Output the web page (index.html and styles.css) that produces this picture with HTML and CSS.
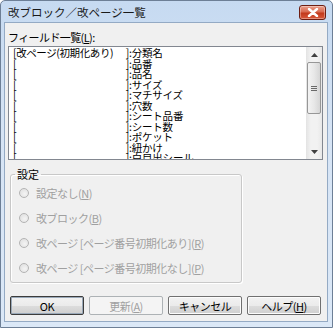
FILE: index.html
```html
<!DOCTYPE html>
<html lang="ja">
<head>
  <meta charset="UTF-8" />
  <title>改ブロック／改ページ一覧</title>
  <link rel="stylesheet" href="styles.css">
</head>
<body>

  <div class="window">

    <div class="titlebar">
      <span class="title">改ブロック／改ページ一覧</span>
      <div class="close">
        <svg width="12" height="9" viewBox="0 0 12 9">
          <path d="M2 1 L10 8 M10 1 L2 8" stroke="#fff" stroke-width="2.4" stroke-linecap="round"/>
        </svg>
      </div>
    </div>

    <div class="client">

      <div class="field-label">フィールド一覧(<u>L</u>):</div>

      <div class="listbox">
        <div class="rows">
          <div class="row"><span class="tag"><span>[改ページ(初期化あり)</span><span>]</span></span><span class="name">:分類名</span></div>
          <div class="row"><span class="tag"><span>[</span><span>]</span></span><span class="name">:品番</span></div>
          <div class="row"><span class="tag"><span>[</span><span>]</span></span><span class="name">:品名</span></div>
          <div class="row"><span class="tag"><span>[</span><span>]</span></span><span class="name">:サイズ</span></div>
          <div class="row"><span class="tag"><span>[</span><span>]</span></span><span class="name">:マチサイズ</span></div>
          <div class="row"><span class="tag"><span>[</span><span>]</span></span><span class="name">:穴数</span></div>
          <div class="row"><span class="tag"><span>[</span><span>]</span></span><span class="name">:シート品番</span></div>
          <div class="row"><span class="tag"><span>[</span><span>]</span></span><span class="name">:シート数</span></div>
          <div class="row"><span class="tag"><span>[</span><span>]</span></span><span class="name">:ポケット</span></div>
          <div class="row"><span class="tag"><span>[</span><span>]</span></span><span class="name">:紐かけ</span></div>
          <div class="row"><span class="tag"><span>[</span><span>]</span></span><span class="name">:白目出シール</span></div>
        </div>

        <div class="scrollbar">
          <div class="arrow">
            <svg width="7" height="4" viewBox="0 0 7 4"><path d="M0 4 L3.5 0 L7 4 Z" fill="#404040"/></svg>
          </div>
          <div class="track">
            <div class="thumb">
              <span class="grip"></span>
              <span class="grip"></span>
              <span class="grip"></span>
            </div>
          </div>
          <div class="arrow">
            <svg width="7" height="4" viewBox="0 0 7 4"><path d="M0 0 L7 0 L3.5 4 Z" fill="#404040"/></svg>
          </div>
        </div>
      </div>

      <fieldset class="group">
        <legend>設定</legend>
        <label class="radio"><span class="dot"></span>設定なし(<u>N</u>)</label>
        <label class="radio"><span class="dot"></span>改ブロック(<u>B</u>)</label>
        <label class="radio"><span class="dot"></span>改ページ [ページ番号初期化あり](<u>R</u>)</label>
        <label class="radio"><span class="dot"></span>改ページ [ページ番号初期化なし](<u>P</u>)</label>
      </fieldset>

      <div class="buttons">
        <button class="btn default">OK</button>
        <button class="btn" disabled>更新(<u>A</u>)</button>
        <button class="btn">キャンセル</button>
        <button class="btn">ヘルプ(<u>H</u>)</button>
      </div>

    </div>

  </div>

</body>
</html>
```

FILE: styles.css
```css
* {
  margin: 0;
  padding: 0;
  box-sizing: border-box;
}

body {
  font-family: "Noto Sans CJK JP", "Noto Sans", sans-serif;
  font-size: 11px;
  background-color: #fff;
  color: #000;
}

.window {
  width: 333px;
  height: 328px;
  border: 1px solid #6d7f96;
  border-radius: 5px 5px 0 0;
  background: linear-gradient(to bottom, #c6daf1, #d6e4f5 40%, #dbe8f7);
  display: flex;
  flex-direction: column;
}

.titlebar {
  height: 21px;
  display: flex;
  justify-content: space-between;
  align-items: center;
  padding: 0 6px 0 7px;
}

.title {
  font-size: 11.5px;
  color: #1a1a1a;
}

.close {
  width: 27px;
  height: 15px;
  margin-top: 1px;
  border: 1px solid #6e1e12;
  border-radius: 3px;
  background: linear-gradient(to bottom, #eba08e, #d86a50 45%, #c2391c 55%, #d8583a);
  box-shadow: inset 0 0 0 1px rgba(255, 255, 255, 0.35);
  display: flex;
  justify-content: center;
  align-items: center;
}

.client {
  flex: 1;
  margin: 0 4px 5px 3px;
  border: 1px solid #94aac4;
  background-color: #f0f0f0;
  padding: 8px 0 0 3px;
}

.field-label {
  line-height: 12px;
  height: 12px;
  letter-spacing: -0.6px;
}

.listbox {
  margin-top: 3px;
  width: 315px;
  height: 114px;
  border: 1px solid #828790;
  background-color: #fff;
  display: flex;
  overflow: hidden;
}

.rows {
  flex: 1;
  padding: 1px 0 0 4px;
  font-size: 10.5px;
  line-height: 10.5px;
}

.row {
  display: flex;
  height: 10.5px;
  white-space: nowrap;
}

.tag {
  width: 116px;
  display: flex;
  justify-content: space-between;
  letter-spacing: -0.4px;
}

.name {
  letter-spacing: -0.2px;
}

.scrollbar {
  width: 16px;
  display: flex;
  flex-direction: column;
  background: linear-gradient(to right, #e3e3e3, #f2f2f2 30%, #f2f2f2 70%, #e8e8e8);
}

.arrow {
  height: 15px;
  display: flex;
  justify-content: center;
  align-items: center;
}

.track {
  flex: 1;
}

.thumb {
  height: 52px;
  margin: 0 1px;
  border: 1px solid #979797;
  border-radius: 2px;
  background: linear-gradient(to right, #f3f3f3, #e8e8e8 50%, #d6d6d6);
  display: flex;
  flex-direction: column;
  justify-content: center;
  align-items: center;
  gap: 1px;
}

.grip {
  width: 6px;
  height: 1px;
  background-color: #6a6a6a;
}

.group {
  margin: 8px 0 0 2px;
  width: 232px;
  height: 115px;
  border: 1px solid #c8c8c8;
  border-radius: 3px;
  padding: 0 0 2px 6px;
  box-shadow: inset 1px 1px 0 #fff, 1px 1px 0 #fff;
}

.group legend {
  padding: 0 2px;
  margin-left: -2px;
  line-height: 12px;
  color: #000;
}

.radio {
  display: flex;
  align-items: center;
  height: 25px;
  color: #a0a0a0;
  letter-spacing: -0.5px;
}

.dot {
  width: 10px;
  height: 10px;
  border-radius: 50%;
  border: 1px solid #b4b4b4;
  background: radial-gradient(circle at 60% 60%, #f4f4f4, #dcdcdc);
  margin: 0 7px 0 2px;
}

.buttons {
  display: flex;
  gap: 5px;
  margin: 13px 0 0 2px;
}

.btn {
  width: 74px;
  height: 19px;
  font-family: inherit;
  font-size: 11px;
  font-weight: 400;
  color: #000;
  border: 1px solid #707070;
  border-radius: 2px;
  background: linear-gradient(to bottom, #f2f2f2, #ebebeb 50%, #dddddd 51%, #cfcfcf);
  box-shadow: inset 0 0 0 1px #fcfcfc;
  letter-spacing: -0.5px;
}

.btn.default {
  border-color: #3c3c3c;
  box-shadow: inset 0 0 0 1px #9aa9b9;
}

.btn:disabled {
  color: #a0a0a0;
  border-color: #adb2b5;
  background: #f4f4f4;
  box-shadow: none;
}
```
